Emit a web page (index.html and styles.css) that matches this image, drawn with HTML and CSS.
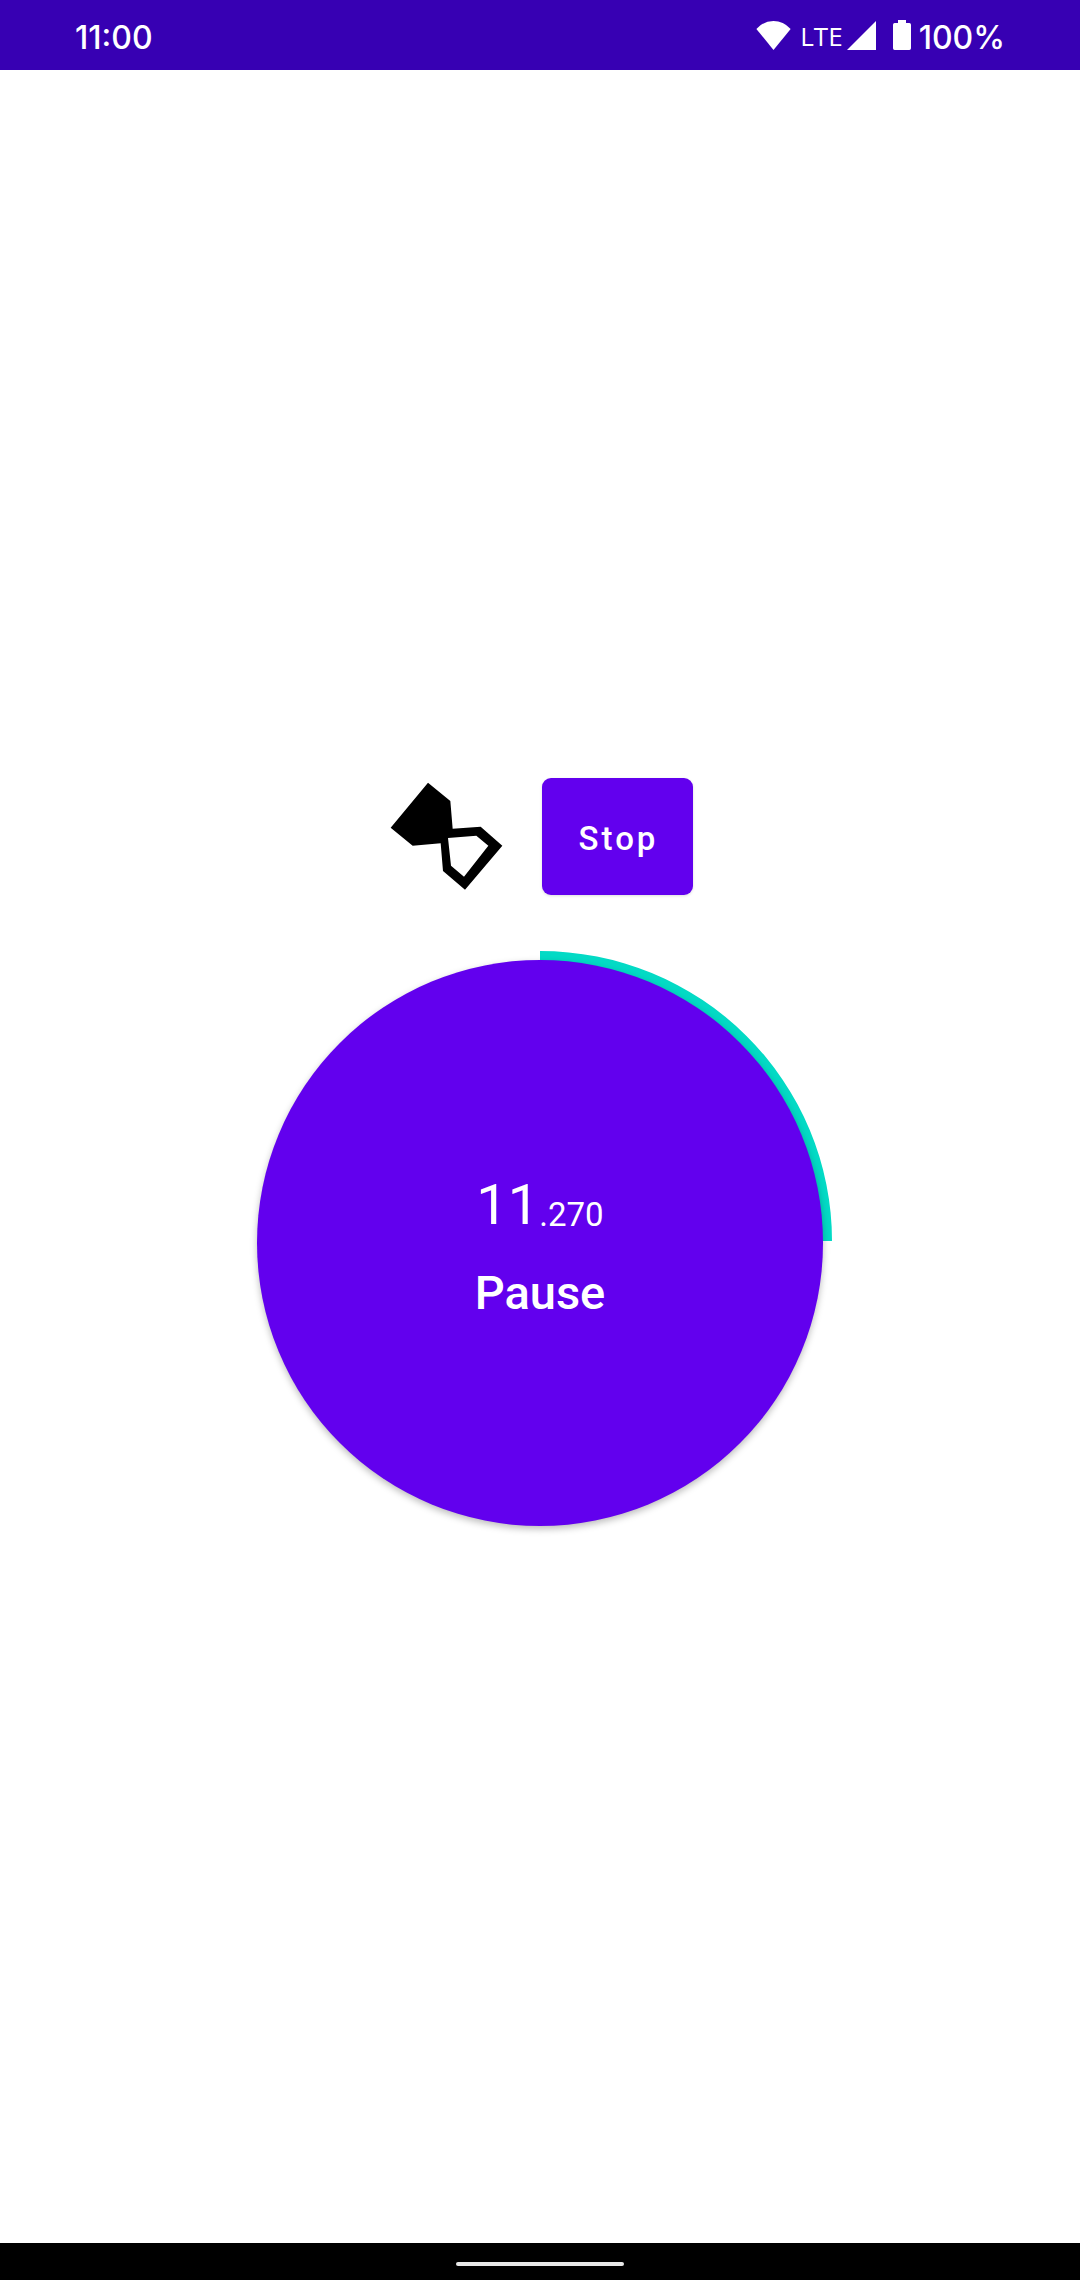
FILE: index.html
```html
<!DOCTYPE html>
<html lang="en">
<head>
<meta charset="utf-8">
<meta name="viewport" content="width=device-width, initial-scale=1">
<title>Timer</title>
<link rel="stylesheet" href="styles.css">
</head>
<body>
<header class="status-bar">
  <time class="clock">11:00</time>
  <div class="indicators">
    <svg class="wifi" viewBox="0 0 104 88" aria-hidden="true"><path d="M0 24Q22 0 52 0Q82 0 104 24L52 88Z"/></svg>
    <span class="network">LTE</span>
    <svg class="signal" viewBox="0 0 29 29" aria-hidden="true"><path d="M0 29L29 0V29Z"/></svg>
    <svg class="battery" viewBox="0 0 54 90" aria-hidden="true"><path d="M15 9V0H39V9H49Q54 9 54 14V85Q54 90 49 90H5Q0 90 0 85V14Q0 9 5 9Z"/></svg>
    <span class="charge">100%</span>
  </div>
</header>
<main class="timer">
  <div class="controls">
    <svg class="hourglass" viewBox="51 54 357 351" aria-hidden="true"><path fill-rule="evenodd" d="M174 68L241 123L248 206L332 200L397 257L285 389L219 333L212 250L128 257L62 203ZM234 234L243 317L282 350L355 257L319 227Z"/></svg>
    <button class="stop" type="button">Stop</button>
  </div>
  <div class="dial">
    <svg class="progress" viewBox="0 0 584 584" aria-hidden="true"><path d="M292 0A292 290 0 0 1 584 290H568A276 274 0 0 0 292 16Z"/></svg>
    <button class="toggle" type="button">
      <span class="elapsed"><span class="seconds">11</span><span class="millis">.270</span></span>
      <span class="action">Pause</span>
    </button>
  </div>
</main>
<footer class="nav-bar"><div class="home-handle"></div></footer>
</body>
</html>
```
FILE: styles.css
```css
* {
  box-sizing: border-box;
}

body {
  margin: 0;
  min-height: 100vh;
  display: flex;
  flex-direction: column;
  background: #fff;
  font-family: Roboto, sans-serif;
}

svg {
  display: block;
  fill: currentColor;
}

.status-bar {
  height: 70px;
  padding: 6px 75px 0;
  display: flex;
  justify-content: space-between;
  align-items: center;
  background: #3700b3;
  color: #fff;
  font: 500 32px/40px Inter, sans-serif;
}

.indicators {
  display: flex;
  align-items: center;
}

.wifi {
  width: 35px;
  height: 29px;
  margin-bottom: 6px;
}

.network {
  margin-left: 9px;
  padding-bottom: 4px;
  font: 400 26px/36px "Open Sans", sans-serif;
}

.signal {
  width: 29px;
  height: 29px;
  margin: 0 17px 6px 4px;
}

.battery {
  width: 18px;
  height: 30px;
  margin: 0 8px 6px 0;
}

.timer {
  flex: 1;
  display: flex;
  flex-direction: column;
  align-items: center;
  justify-content: center;
  gap: 56px;
}

.controls {
  display: flex;
  gap: 36px;
}

.hourglass {
  width: 119px;
  height: 117px;
}

button {
  border: 0;
  background: #6200ee;
  color: #fff;
  font-family: inherit;
}

.stop {
  width: 151px;
  padding: 4px 0 0 2px;
  border-radius: 9px;
  box-shadow: 0 1px 3px #0002;
  font-size: 33px;
  font-weight: 500;
  letter-spacing: 3px;
}

.dial {
  position: relative;
  padding: 9px;
}

.progress {
  position: absolute;
  inset: 0;
  color: #03dac5;
}

.toggle {
  position: relative;
  width: 566px;
  height: 566px;
  padding: 8px 0 0;
  border-radius: 50%;
  display: flex;
  flex-direction: column;
  align-items: center;
  justify-content: center;
  gap: 20px;
  box-shadow: 0 3px 7px #0004;
}

.elapsed {
  display: flex;
  align-items: flex-end;
}

.seconds {
  font-size: 56px;
  line-height: 72px;
}

.millis {
  font-size: 33px;
  line-height: 52px;
}

.action {
  font-size: 47px;
  line-height: 64px;
  font-weight: 500;
}

.nav-bar {
  height: 37px;
  display: flex;
  align-items: center;
  justify-content: center;
  padding-top: 5px;
  background: #000;
}

.home-handle {
  width: 168px;
  height: 4px;
  border-radius: 2px;
  background: #e8e8e8;
}
```
